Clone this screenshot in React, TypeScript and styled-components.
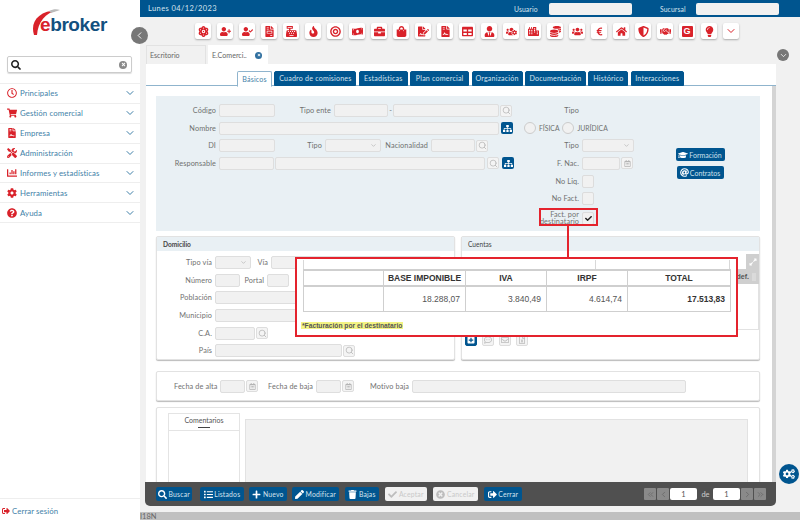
import React from "react";
import styled, { createGlobalStyle } from "styled-components";
import {
  FaAtom, FaUserPlus, FaUserCheck, FaFileInvoice, FaCashRegister, FaFire, FaBullseye, FaMoneyBillWave,
  FaBriefcase, FaShoppingBag, FaFileSignature, FaFileContract, FaTable, FaUserTie, FaUsersCog, FaCity,
  FaCoins, FaUsers, FaEuroSign, FaHome, FaShieldAlt, FaHandshake, FaLightbulb, FaSearch, FaTimes,
  FaRegClock, FaShoppingCart, FaChartBar, FaCog, FaQuestionCircle, FaSitemap, FaGraduationCap, FaCheck,
  FaList, FaPlus, FaPen, FaTrash, FaTimesCircle, FaSignOutAlt, FaRegCalendarAlt, FaCogs, FaRegCommentDots,
  FaRegEnvelope, FaExpandAlt, FaPlusSquare, FaAt, FaTools, FaRegFileExcel, FaGripLinesVertical,
} from "react-icons/fa";
import { ChevronDown, ChevronLeft, ChevronRight, ChevronsLeft, ChevronsRight, Search } from "lucide-react";

const BLUE = "#00558f";
const RED = "#d9222a";
const FONT = `Lato, "Open Sans", sans-serif`;

const Global = createGlobalStyle`
  html, body { margin: 0; padding: 0; background: #f1f1f1; }
  * { box-sizing: border-box; }
  body { font-family: ${FONT}; }
`;

const Page = styled.div`
  position: relative; width: 800px; height: 520px; display: flex; overflow: hidden;
  font-family: ${FONT}; font-size: 7.3px; color: #707070;
`;

/* Sidebar */
const Sidebar = styled.aside`
  width: 140px; background: #fff; display: flex; flex-direction: column; flex-shrink: 0;
`;
const LogoWrap = styled.div`
  position: relative; height: 56px; padding: 14px 0 0 40px;
  font: bold 19px "Liberation Sans", sans-serif; letter-spacing: -0.4px; color: #12507f;
  em { font-style: normal; color: ${RED}; }
  svg { position: absolute; left: 31px; top: 8px; }
`;
const SearchBox = styled.div`
  margin-left: 7px; width: 125px; height: 17px; border: 1px solid #ccc; border-radius: 2px;
  display: flex; align-items: center; justify-content: space-between; padding: 0 4px 0 3px;
  box-shadow: 0 1px 1px #ddd;
`;
const ClearDot = styled.span`
  width: 8px; height: 8px; border-radius: 50%; background: #8a8a8a; color: #fff;
  display: flex; align-items: center; justify-content: center;
`;
const Menu = styled.nav`
  margin-top: 10px; border-top: 1px solid #eee; display: flex; flex-direction: column;
`;
const MenuRow = styled.div`
  height: 19.9px; display: flex; align-items: center; padding: 0 4px 0 7px; border-bottom: 1px solid #eee;
  color: #3f7fa8; font-size: 7.8px; letter-spacing: 0.1px;
  span { flex: 1; margin-left: 3px; }
  svg:first-child { color: ${RED}; width: 10px; height: 10px; }
  svg:last-child { color: #3f7fa8; }
`;
const SideFoot = styled.div`
  margin-top: auto; height: 22px; border-top: 1px solid #eee; display: flex; align-items: center; gap: 2px;
  padding: 3px 0 0 2px; color: #3f7fa8; font-size: 7.8px; letter-spacing: 0.1px;
  svg { color: ${RED}; }
`;

/* Main */
const Main = styled.main`
  flex: 1; min-width: 0; display: flex; flex-direction: column; background: #f1f1f1;
`;
const TopBar = styled.header`
  height: 17px; background: ${BLUE}; color: #d5e3ee; display: flex; align-items: center;
  padding-left: 8px; font-size: 7.2px; white-space: nowrap; flex-shrink: 0;
`;
const TopDate = styled.span`
  width: 62px; font-size: 7.5px; letter-spacing: 0.4px; flex-shrink: 0;
`;
const TopLabel = styled.span<{ $ml: number; $w: number }>`
  margin-left: ${p => p.$ml}px; width: ${p => p.$w}px; font-size: 6.8px; letter-spacing: 0.1px; flex-shrink: 0;
`;
const TopInput = styled.div`
  width: 83px; height: 12px; border-radius: 2px; background: #f1f1f1; flex-shrink: 0;
`;
const IconBar = styled.div`
  height: 28px; padding: 6px 0 0 55px; display: flex; gap: 6px; flex-shrink: 0;
`;
const ToolIcon = styled.div`
  width: 16px; height: 16px; background: #fff; border-radius: 2px; box-shadow: 0 1px 2px #aaa;
  color: ${RED}; display: flex; align-items: center; justify-content: center;
  font: bold 10px "Liberation Sans", sans-serif;
`;
const GBox = styled.span`
  width: 11px; height: 11px; background: ${RED}; color: #fff; border-radius: 1px; font-size: 9px;
  display: flex; align-items: center; justify-content: center;
`;
const DocTabs = styled.div`
  height: 19px; display: flex; gap: 2px; margin-left: 6px; flex-shrink: 0;
`;
const DocTab = styled.div<{ $on?: boolean }>`
  width: 60px; background: ${p => (p.$on ? "#fff" : "#f1f1f1")}; padding: 0 3px; display: flex; align-items: center;
  justify-content: space-between; border: 1px solid ${p => (p.$on ? "#fff" : "#e2e2e2")}; border-bottom: 0;
  color: #666; font-size: 7.1px; white-space: nowrap;
`;
const TabClose = styled.span`
  width: 7px; height: 7px; border-radius: 50%; background: #2f6f9f; color: #fff; margin-right: 2px;
  display: flex; align-items: center; justify-content: center;
`;
const Panel = styled.section`
  flex: 1; min-height: 0; width: 630px; margin-left: 6px; background: #fff; display: flex; flex-direction: column; overflow: hidden;
`;
const SubTabs = styled.div`
  height: 22px; padding: 7px 0 0 91px; display: flex; gap: 2.4px; border-bottom: 1px solid #8fb4cd; flex-shrink: 0;
`;
const SubTab = styled.div<{ $w: number; $on?: boolean }>`
  width: ${p => p.$w}px; height: ${p => (p.$on ? 16 : 15)}px; border-radius: 2px 2px 0 0; display: flex; align-items: center; justify-content: center;
  background: ${p => (p.$on ? "#fff" : BLUE)}; color: ${p => (p.$on ? "#3f7fa8" : "#d5e3ee")};
  border: 1px solid ${p => (p.$on ? "#8fb4cd" : BLUE)}; ${p => p.$on && "border-bottom-color:#fff;"}
  font-size: 7.1px; letter-spacing: 0.2px; white-space: nowrap; flex-shrink: 0;
`;
const PanelBody = styled.div`
  flex: 1; min-height: 0; padding: 10px 12px 0 10px; border-right: 4px solid #d4d4d4; margin-right: 0;
  display: flex; flex-direction: column;
`;
const FormPanel = styled.div`
  height: 135px; background: #e9f0f4; display: flex; padding-top: 8px; flex-shrink: 0;
`;
const Col = styled.div<{ $w: number }>`
  width: ${p => p.$w}px; display: flex; flex-direction: column; gap: 4.67px; flex-shrink: 0;
`;
const Row = styled.div<{ $mt?: number }>`
  height: 13px; display: flex; align-items: center; flex-shrink: 0; margin-top: ${p => p.$mt ?? 0}px;
`;
const Label = styled.label<{ $w: number }>`
  width: ${p => p.$w}px; flex-shrink: 0; text-align: right; padding-right: 3px; color: #707070; white-space: nowrap; letter-spacing: 0.1px;
`;
const Field = styled.div<{ $w: number; $ml?: number }>`
  width: ${p => p.$w}px; height: 13px; flex-shrink: 0; margin-left: ${p => p.$ml ?? 0}px; background: #f1f1f1;
  border: 1px solid #dedede; border-radius: 2px; display: flex; align-items: center; justify-content: flex-end;
  padding-right: 3px; color: #aaa;
`;
const Dash = styled.span`
  width: 5px; text-align: center; color: #777;
`;
const LookBtn = styled.div<{ $ml?: number }>`
  width: 12px; height: 12px; margin-left: ${p => p.$ml ?? 1}px; flex-shrink: 0; border: 1px solid #ddd; border-radius: 2px;
  color: #b4b4b4; display: flex; align-items: center; justify-content: center; background: #f4f4f4;
`;
const OrgBtn = styled.div<{ $ml?: number }>`
  width: 12px; height: 12px; margin-left: ${p => p.$ml ?? 0}px; flex-shrink: 0; border-radius: 2px; background: ${BLUE}; color: #fff;
  display: flex; align-items: center; justify-content: center;
`;
const Radio = styled.span<{ $ml: number }>`
  width: 12px; height: 12px; margin-left: ${p => p.$ml}px; border: 1px solid #ccc; border-radius: 50%; background: #f1f1f1; flex-shrink: 0;
`;
const RadioText = styled.span`
  margin-left: 3px; color: #707070; white-space: nowrap; font-size: 6.8px;
`;
const Check = styled.div`
  width: 12px; height: 13px; background: #f1f1f1; border: 1px solid #dcdcdc; border-radius: 2px; color: #222;
  display: flex; align-items: center; justify-content: center; flex-shrink: 0;
`;
const TwoLine = styled(Label)`
  line-height: 7.5px; padding-right: 3px; white-space: normal;
`;
const ActionCol = styled.div`
  margin: 44px 0 0 41px; width: 50px; display: flex; flex-direction: column; align-items: center; gap: 5px;
`;
const ActionBtn = styled.div<{ $w: number }>`
  width: ${p => p.$w}px; height: 13px; background: ${BLUE}; color: #cfe0ec; border-radius: 2px; display: flex; align-items: center;
  justify-content: center; gap: 1px; font-size: 7px;
  svg { color: #fff; }
`;
const TwoCards = styled.div`
  margin-top: 5px; height: 124px; display: flex; gap: 6px; flex-shrink: 0;
`;
const Card = styled.div<{ $w?: number }>`
  width: ${p => (p.$w ? `${p.$w}px` : "auto")}; background: #fff; border: 1px solid #e2e2e2; border-radius: 2px; box-shadow: 0 1px 1px #bbb;
  display: flex; flex-direction: column; flex-shrink: 0;
`;
const CardHead = styled.div`
  height: 14px; background: #e9f0f4; padding-left: 6px; display: flex; align-items: center; color: #444; font-size: 6.6px; flex-shrink: 0;
`;
const CardRows = styled.div`
  padding-top: 5px; display: flex; flex-direction: column; gap: 4.7px;
`;
const GridHead = styled.div`
  margin-top: 3px; height: 30px; display: flex; flex-direction: column; align-items: flex-end; flex-shrink: 0;
`;
const ExpandTab = styled.div`
  width: 13px; height: 15px; background: #cfcfcf; color: #fff; display: flex; align-items: center; justify-content: center;
`;
const GridTitle = styled.div`
  width: 100%; height: 15px; background: #cfcfcf; color: #555; display: flex; align-items: center; justify-content: flex-end;
  font: bold 7px "Liberation Sans", sans-serif; padding-right: 1px; gap: 1px;
  svg { color: #e6e6e6; }
`;
const GridBody = styled.div`
  height: 46px; border-bottom: 1px solid #e2e2e2; border-right: 1px solid #e2e2e2; flex-shrink: 0;
`;
const CardBtns = styled.div`
  padding: 4px 0 0 3px; display: flex; gap: 5px;
`;
const MiniBtn = styled.div<{ $on?: boolean }>`
  width: 12px; height: 12px; border-radius: 2px; display: flex; align-items: center; justify-content: center;
  background: ${p => (p.$on ? BLUE : "#f4f4f4")}; color: ${p => (p.$on ? "#fff" : "#bbb")}; border: 1px solid ${p => (p.$on ? BLUE : "#ddd")};
`;
const DatesCard = styled(Card)`
  margin-top: 11px; height: 30px; flex-direction: row; align-items: center; padding-left: 17px;
`;
const CommentsCard = styled(Card)`
  margin-top: 6px; height: 110px; flex-direction: row; padding: 5px 0 0 11px; gap: 5px; align-items: stretch;
`;
const CommentCol = styled.div`
  width: 72px; display: flex; flex-direction: column; flex-shrink: 0;
`;
const CommentTab = styled.div`
  height: 17px; border: 1px solid #e4e4e4; border-bottom: 0; display: flex; justify-content: center; padding-top: 2px; color: #555; font-size: 7px;
  span { background: linear-gradient(#444, #444) center bottom / 12px 1px no-repeat; height: 12px; }
`;
const CommentList = styled.div`
  flex: 1; border: 1px solid #e4e4e4;
`;
const CommentArea = styled.div`
  width: 503px; margin-top: 6px; background: #f1f1f1; border: 1px solid #e2e2e2;
`;

/* Toolbar */
const Toolbar = styled.footer`
  width: 631px; height: 24px; margin-left: 5px; background: #505050; border-radius: 0 0 5px 5px; display: flex; align-items: center;
  padding: 0 9px 0 11px; flex-shrink: 0;
`;
const ToolBtn = styled.div<{ $w: number; $ml: number; $off?: boolean }>`
  width: ${p => p.$w}px; height: 14px; margin-left: ${p => p.$ml}px; border-radius: 2px; display: flex; align-items: center; justify-content: center; gap: 1.5px;
  background: ${p => (p.$off ? "#f1f1f1" : BLUE)}; color: ${p => (p.$off ? "#c9c9c9" : "#d5e3ee")}; font-size: 6.8px; letter-spacing: 0.2px; flex-shrink: 0;
  svg { color: ${p => (p.$off ? "#bdbdbd" : "#fff")}; }
`;
const Pager = styled.div`
  margin-left: auto; display: flex; align-items: center; color: #ccc; font-size: 7.5px;
`;
const PageBtn = styled.div`
  width: 12px; height: 12px; margin-right: 1px; background: #8a8a8a; color: #666; border-radius: 1px; display: flex; align-items: center; justify-content: center;
`;
const PageNum = styled.div`
  width: 27px; height: 12px; margin-right: 1px; background: #fff; border-radius: 2px; color: #555; display: flex; align-items: center; justify-content: center;
`;
const De = styled.span`
  width: 15px; text-align: center;
`;
const Status = styled.div`
  margin-top: 6px; height: 8px; background: #c0c0c0; color: #666; font-size: 7.5px; line-height: 9px; overflow: hidden; flex-shrink: 0;
`;

/* Overlays */
const RoundBtn = styled.div<{ $x: number; $y: number; $size: number; $bg: string }>`
  position: absolute; left: ${p => p.$x}px; top: ${p => p.$y}px; width: ${p => p.$size}px; height: ${p => p.$size}px; border-radius: 50%;
  background: ${p => p.$bg}; color: #fff; display: flex; align-items: center; justify-content: center;
`;
const FactMark = styled.div`
  position: absolute; left: 539px; top: 208px; width: 59px; height: 18px; border: 2px solid #e4232d;
`;
const Connector = styled.div`
  position: absolute; left: 567px; top: 226px; width: 2px; height: 31px; background: #e4232d;
`;
const Callout = styled.div`
  position: absolute; left: 295px; top: 257px; width: 443px; height: 80px; background: #fff; border: 2px solid #e4232d; padding: 1px 0 0 6px;
`;
const Stub = styled.div`
  width: 427px; height: 9px; border-left: 1px solid #d8d8d8; border-right: 1px solid #d8d8d8; display: flex; padding-left: 291px;
  &::after { content: ""; width: 1px; height: 9px; background: #d8d8d8; }
`;
const Tbl = styled.table`
  border-collapse: collapse; width: 427px; table-layout: fixed; font-family: "Liberation Sans", Arial, sans-serif; color: #333;
  th, td { border: 1px solid #cfcfcf; }
  th { height: 16px; font-size: 8.5px; font-weight: bold; }
  td { height: 25px; font-size: 8.5px; text-align: right; padding-right: 5px; color: #555; }
  td:last-child { font-weight: bold; color: #333; }
  tr { border-top: 2px solid #cfcfcf; }
`;
const Note = styled.div`
  margin: 9px 0 0 -2px;
  span { background: #f3f383; color: #555; font: bold 6.7px "Liberation Sans", Arial, sans-serif; padding: 0 1px; }
`;

const tools = [
  <FaAtom size={11} />, <FaUserPlus size={11} />, <FaUserCheck size={11} />, <FaFileInvoice size={11} />, <FaCashRegister size={11} />,
  <FaFire size={11} />, <FaBullseye size={11} />, <FaMoneyBillWave size={11} />, <FaBriefcase size={11} />, <FaShoppingBag size={11} />,
  <FaFileSignature size={11} />, <FaFileContract size={11} />, <FaTable size={11} />, <FaUserTie size={11} />, <FaUsersCog size={11} />,
  <FaCity size={11} />, <FaCoins size={11} />, <FaUsers size={11} />, <FaEuroSign size={9} />, <FaHome size={11} />, <FaShieldAlt size={11} />,
  <FaHandshake size={11} />, <GBox>G</GBox>, <FaLightbulb size={11} />, <ChevronDown size={12} />,
];
const menu: [React.ReactNode, string][] = [
  [<FaRegClock />, "Principales"], [<FaShoppingCart />, "Gestión comercial"], [<FaFileContract />, "Empresa"], [<FaTools />, "Administración"],
  [<FaChartBar />, "Informes y estadísticas"], [<FaCog />, "Herramientas"], [<FaQuestionCircle />, "Ayuda"],
];
const subTabs: [string, number][] = [
  ["Cuadro de comisiones", 82], ["Estadísticas", 49], ["Plan comercial", 59], ["Organización", 51], ["Documentación", 61], ["Histórico", 40], ["Interacciones", 53],
];

const Look = ({ ml }: { ml?: number }) => <LookBtn $ml={ml}><Search size={9} /></LookBtn>;
const Org = ({ ml }: { ml?: number }) => <OrgBtn $ml={ml}><FaSitemap size={9} /></OrgBtn>;
const Cal = () => <LookBtn><FaRegCalendarAlt size={7} /></LookBtn>;
const Sel = ({ w, ml }: { w: number; ml?: number }) => <Field $w={w} $ml={ml}><ChevronDown size={7} /></Field>;

export default function App() {
  return (
    <Page>
      <Global />
      <Sidebar>
        <LogoWrap>
          <svg width="30" height="28" viewBox="0 0 30 28">
            <path d="M3 27 C-1 14 7 3 27 2 C14 5 7 14 6 27 Z" fill={RED} />
            <path d="M18 3 C22 1 26 1 29 2 C26 3 23 4 20 5 Z" fill="#bbb" />
          </svg>
          <em>e</em>broker
        </LogoWrap>
        <SearchBox>
          <FaSearch size={10} color="#222" />
          <ClearDot><FaTimes size={5} /></ClearDot>
        </SearchBox>
        <Menu>
          {menu.map(([icon, text]) => (
            <MenuRow key={text}>{icon}<span>{text}</span><ChevronDown size={12} /></MenuRow>
          ))}
        </Menu>
        <SideFoot><FaSignOutAlt size={8} />Cerrar sesión</SideFoot>
      </Sidebar>
      <Main>
        <TopBar>
          <TopDate>Lunes 04/12/2023</TopDate>
          <TopLabel $ml={304} $w={35}>Usuario</TopLabel><TopInput />
          <TopLabel $ml={28} $w={36}>Sucursal</TopLabel><TopInput />
        </TopBar>
        <IconBar>{tools.map((t, i) => <ToolIcon key={i}>{t}</ToolIcon>)}</IconBar>
        <DocTabs>
          <DocTab>Escritorio</DocTab>
          <DocTab $on>E.Comerci..<TabClose><FaTimes size={4} /></TabClose></DocTab>
        </DocTabs>
        <Panel>
          <SubTabs>
            <SubTab $w={35} $on>Básicos</SubTab>
            {subTabs.map(([t, w]) => <SubTab key={t} $w={w}>{t}</SubTab>)}
          </SubTabs>
          <PanelBody>
            <FormPanel>
              <Col $w={357}>
                <Row><Label $w={63}>Código</Label><Field $w={56} /><Label $w={59}>Tipo ente</Label><Field $w={54} /><Dash>-</Dash><Field $w={106} /><Look /></Row>
                <Row><Label $w={63}>Nombre</Label><Field $w={280} /><Org ml={2} /></Row>
                <Row><Label $w={63}>DI</Label><Field $w={56} /><Label $w={50}>Tipo</Label><Sel w={56} /><Label $w={50}>Nacionalidad</Label><Field $w={44} /><Look /></Row>
                <Row><Label $w={63}>Responsable</Label><Field $w={55} $ml={0} /><Field $w={210} $ml={1} /><Look ml={2} /><Org ml={3} /></Row>
              </Col>
              <Col $w={121}>
                <Row><Label $w={69}>Tipo</Label></Row>
                <Row><Radio $ml={11} /><RadioText>FÍSICA</RadioText><Radio $ml={3} /><RadioText>JURÍDICA</RadioText></Row>
                <Row><Label $w={69}>Tipo</Label><Sel w={52} /></Row>
                <Row><Label $w={69}>F. Nac.</Label><Field $w={38} /><Cal /></Row>
                <Row><Label $w={69}>No Liq.</Label><Check /></Row>
                <Row><Label $w={69}>No Fact.</Label><Check /></Row>
                <Row $mt={2}><TwoLine $w={69}>Fact. por destinatario</TwoLine><Check><FaCheck size={7} /></Check></Row>
              </Col>
              <ActionCol>
                <ActionBtn $w={49}><FaGraduationCap size={10} />Formación</ActionBtn>
                <ActionBtn $w={47}><FaAt size={9} />Contratos</ActionBtn>
              </ActionCol>
            </FormPanel>
            <TwoCards>
              <Card $w={299}>
                <CardHead><b>Domicilio</b></CardHead>
                <CardRows>
                  <Row><Label $w={58}>Tipo vía</Label><Sel w={36} /><Label $w={20}>Vía</Label><Field $w={170} /><Look /></Row>
                  <Row><Label $w={58}>Número</Label><Field $w={25} /><Label $w={27}>Portal</Label><Field $w={22} /></Row>
                  <Row><Label $w={58}>Población</Label><Field $w={226} /></Row>
                  <Row><Label $w={58}>Municipio</Label><Field $w={226} /></Row>
                  <Row><Label $w={58}>C.A.</Label><Field $w={40} /><Look /></Row>
                  <Row><Label $w={58}>País</Label><Field $w={127} /><Look /></Row>
                </CardRows>
              </Card>
              <Card $w={299}>
                <CardHead>Cuentas</CardHead>
                <GridHead>
                  <ExpandTab><FaExpandAlt size={8} /></ExpandTab>
                  <GridTitle>def.<FaGripLinesVertical size={8} /></GridTitle>
                </GridHead>
                <GridBody />
                <CardBtns>
                  <MiniBtn $on><FaPlusSquare size={8} /></MiniBtn>
                  <MiniBtn><FaRegCommentDots size={8} /></MiniBtn>
                  <MiniBtn><FaRegEnvelope size={8} /></MiniBtn>
                  <MiniBtn><FaRegFileExcel size={8} /></MiniBtn>
                </CardBtns>
              </Card>
            </TwoCards>
            <DatesCard $w={604}>
              <Label $w={46}>Fecha de alta</Label><Field $w={25} /><Cal />
              <Label $w={58}>Fecha de baja</Label><Field $w={25} /><Cal />
              <Label $w={58}>Motivo baja</Label><Field $w={274} />
            </DatesCard>
            <CommentsCard $w={604}>
              <CommentCol>
                <CommentTab><span>Comentarios</span></CommentTab>
                <CommentList />
              </CommentCol>
              <CommentArea />
            </CommentsCard>
          </PanelBody>
        </Panel>
        <Toolbar>
          <ToolBtn $w={36} $ml={0}><FaSearch size={9} />Buscar</ToolBtn>
          <ToolBtn $w={44} $ml={8}><FaList size={9} />Listados</ToolBtn>
          <ToolBtn $w={38} $ml={5}><FaPlus size={9} />Nuevo</ToolBtn>
          <ToolBtn $w={47} $ml={5}><FaPen size={9} />Modificar</ToolBtn>
          <ToolBtn $w={34} $ml={6}><FaTrash size={9} />Bajas</ToolBtn>
          <ToolBtn $w={42} $ml={6} $off><FaCheck size={9} />Aceptar</ToolBtn>
          <ToolBtn $w={45} $ml={6} $off><FaTimesCircle size={9} />Cancelar</ToolBtn>
          <ToolBtn $w={38} $ml={6}><FaSignOutAlt size={9} />Cerrar</ToolBtn>
          <Pager>
            <PageBtn><ChevronsLeft size={9} /></PageBtn>
            <PageBtn><ChevronLeft size={9} /></PageBtn>
            <PageNum>1</PageNum>
            <De>de</De>
            <PageNum>1</PageNum>
            <PageBtn><ChevronRight size={9} /></PageBtn>
            <PageBtn><ChevronsRight size={9} /></PageBtn>
          </Pager>
        </Toolbar>
        <Status>I18N</Status>
      </Main>

      <RoundBtn $x={131} $y={27} $size={17} $bg="#777"><ChevronLeft size={11} /></RoundBtn>
      <RoundBtn $x={777} $y={49} $size={12} $bg="#777"><ChevronDown size={9} /></RoundBtn>
      <RoundBtn $x={779} $y={464} $size={20} $bg={BLUE}><FaCogs size={12} /></RoundBtn>
      <FactMark />
      <Connector />
      <Callout>
        <Stub />
        <Tbl>
          <colgroup><col width={80} /><col width={82} /><col width={81} /><col width={81} /><col width={103} /></colgroup>
          <thead><tr><th></th><th>BASE IMPONIBLE</th><th>IVA</th><th>IRPF</th><th>TOTAL</th></tr></thead>
          <tbody><tr><td></td><td>18.288,07</td><td>3.840,49</td><td>4.614,74</td><td>17.513,83</td></tr></tbody>
        </Tbl>
        <Note><span>*Facturación por el destinatario</span></Note>
      </Callout>
    </Page>
  );
}
